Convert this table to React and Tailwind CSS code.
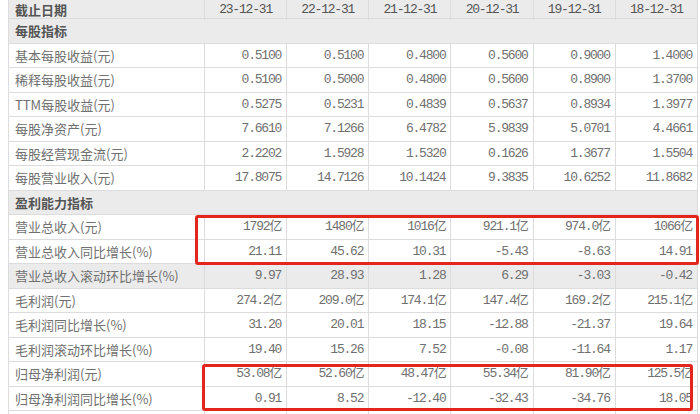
import React from 'react';

const years = ['23-12-31', '22-12-31', '21-12-31', '20-12-31', '19-12-31', '18-12-31'];

const rows = [
  { section: '每股指标' },
  { label: '基本每股收益(元)', values: ['0.5100', '0.5100', '0.4800', '0.5600', '0.9000', '1.4000'] },
  { label: '稀释每股收益(元)', values: ['0.5100', '0.5000', '0.4800', '0.5600', '0.8900', '1.3700'] },
  { label: 'TTM每股收益(元)', values: ['0.5275', '0.5231', '0.4839', '0.5637', '0.8934', '1.3977'] },
  { label: '每股净资产(元)', values: ['7.6610', '7.1266', '6.4782', '5.9839', '5.0701', '4.4661'] },
  { label: '每股经营现金流(元)', values: ['2.2202', '1.5928', '1.5320', '0.1626', '1.3677', '1.5504'] },
  { label: '每股营业收入(元)', values: ['17.8075', '14.7126', '10.1424', '9.3835', '10.6252', '11.8682'] },
  { section: '盈利能力指标' },
  { label: '营业总收入(元)', values: ['1792亿', '1480亿', '1016亿', '921.1亿', '974.0亿', '1066亿'] },
  { label: '营业总收入同比增长(%)', values: ['21.11', '45.62', '10.31', '-5.43', '-8.63', '14.91'] },
  { label: '营业总收入滚动环比增长(%)', values: ['9.97', '28.93', '1.28', '6.29', '-3.03', '-0.42'], hover: true },
  { label: '毛利润(元)', values: ['274.2亿', '209.0亿', '174.1亿', '147.4亿', '169.2亿', '215.1亿'] },
  { label: '毛利润同比增长(%)', values: ['31.20', '20.01', '18.15', '-12.88', '-21.37', '19.64'] },
  { label: '毛利润滚动环比增长(%)', values: ['19.40', '15.26', '7.52', '-0.08', '-11.64', '1.17'] },
  { label: '归母净利润(元)', values: ['53.08亿', '52.60亿', '48.47亿', '55.34亿', '81.90亿', '125.5亿'] },
  { label: '归母净利润同比增长(%)', values: ['0.91', '8.52', '-12.40', '-32.43', '-34.76', '18.05'] },
  { label: '', values: ['', '', '', '', '', ''] },
];

const cjk = "font-['Noto_Sans_CJK_SC',sans-serif]";
const num = "font-['Liberation_Mono','Noto_Sans_CJK_SC',monospace] tracking-[-1.2px]";

const App = () => {
  return (
    <div className="relative w-[700px] h-[414px] overflow-hidden bg-white">
      <div className="ml-2 w-[690px] border-l border-[#dcdcdc]">
        {/* 表头 */}
        <div className="grid grid-cols-[196px_repeat(6,1fr)] h-[19px] bg-[#ebebeb] border-b border-[#dcdcdc]">
          <div className={`flex items-center pl-[6px] text-[13px] font-bold text-[#555] border-r border-[#dcdcdc] ${cjk}`}>
            截止日期
          </div>
          {years.map((y) => (
            <div key={y} className={`flex items-center justify-center text-[13px] text-[#555] border-r border-[#dcdcdc] ${num}`}>
              {y}
            </div>
          ))}
        </div>

        {rows.map((row, i) =>
          row.section ? (
            <div
              key={i}
              className={`flex items-center h-[24.5px] pl-[6px] bg-[#ebebeb] border-b border-r border-[#dcdcdc] text-[13px] font-bold text-[#555] ${cjk}`}
            >
              {row.section}
            </div>
          ) : (
            <div
              key={i}
              className={`grid grid-cols-[196px_repeat(6,1fr)] h-[24.5px] border-b border-[#dcdcdc] ${row.hover ? 'bg-[#ebebeb]' : 'bg-white'}`}
            >
              <div className={`flex items-center pl-[6px] text-[13px] text-[#707070] border-r border-[#dcdcdc] whitespace-nowrap ${cjk}`}>
                {row.label}
              </div>
              {row.values.map((v, j) => (
                <div key={j} className={`flex items-center justify-end pr-[5px] text-[13px] text-[#707070] border-r border-[#dcdcdc] whitespace-nowrap ${num}`}>
                  {v}
                </div>
              ))}
            </div>
          )
        )}
      </div>

      {/* 红框标注 */}
      <div className="absolute left-[195px] top-[215px] w-[504px] h-[50px] border-[3px] border-[#e3261d] rounded-[3px]" />
      <div className="absolute left-[202px] top-[364px] w-[491px] h-[47px] border-[3px] border-[#e3261d] rounded-[3px]" />
    </div>
  );
};

export default App;
